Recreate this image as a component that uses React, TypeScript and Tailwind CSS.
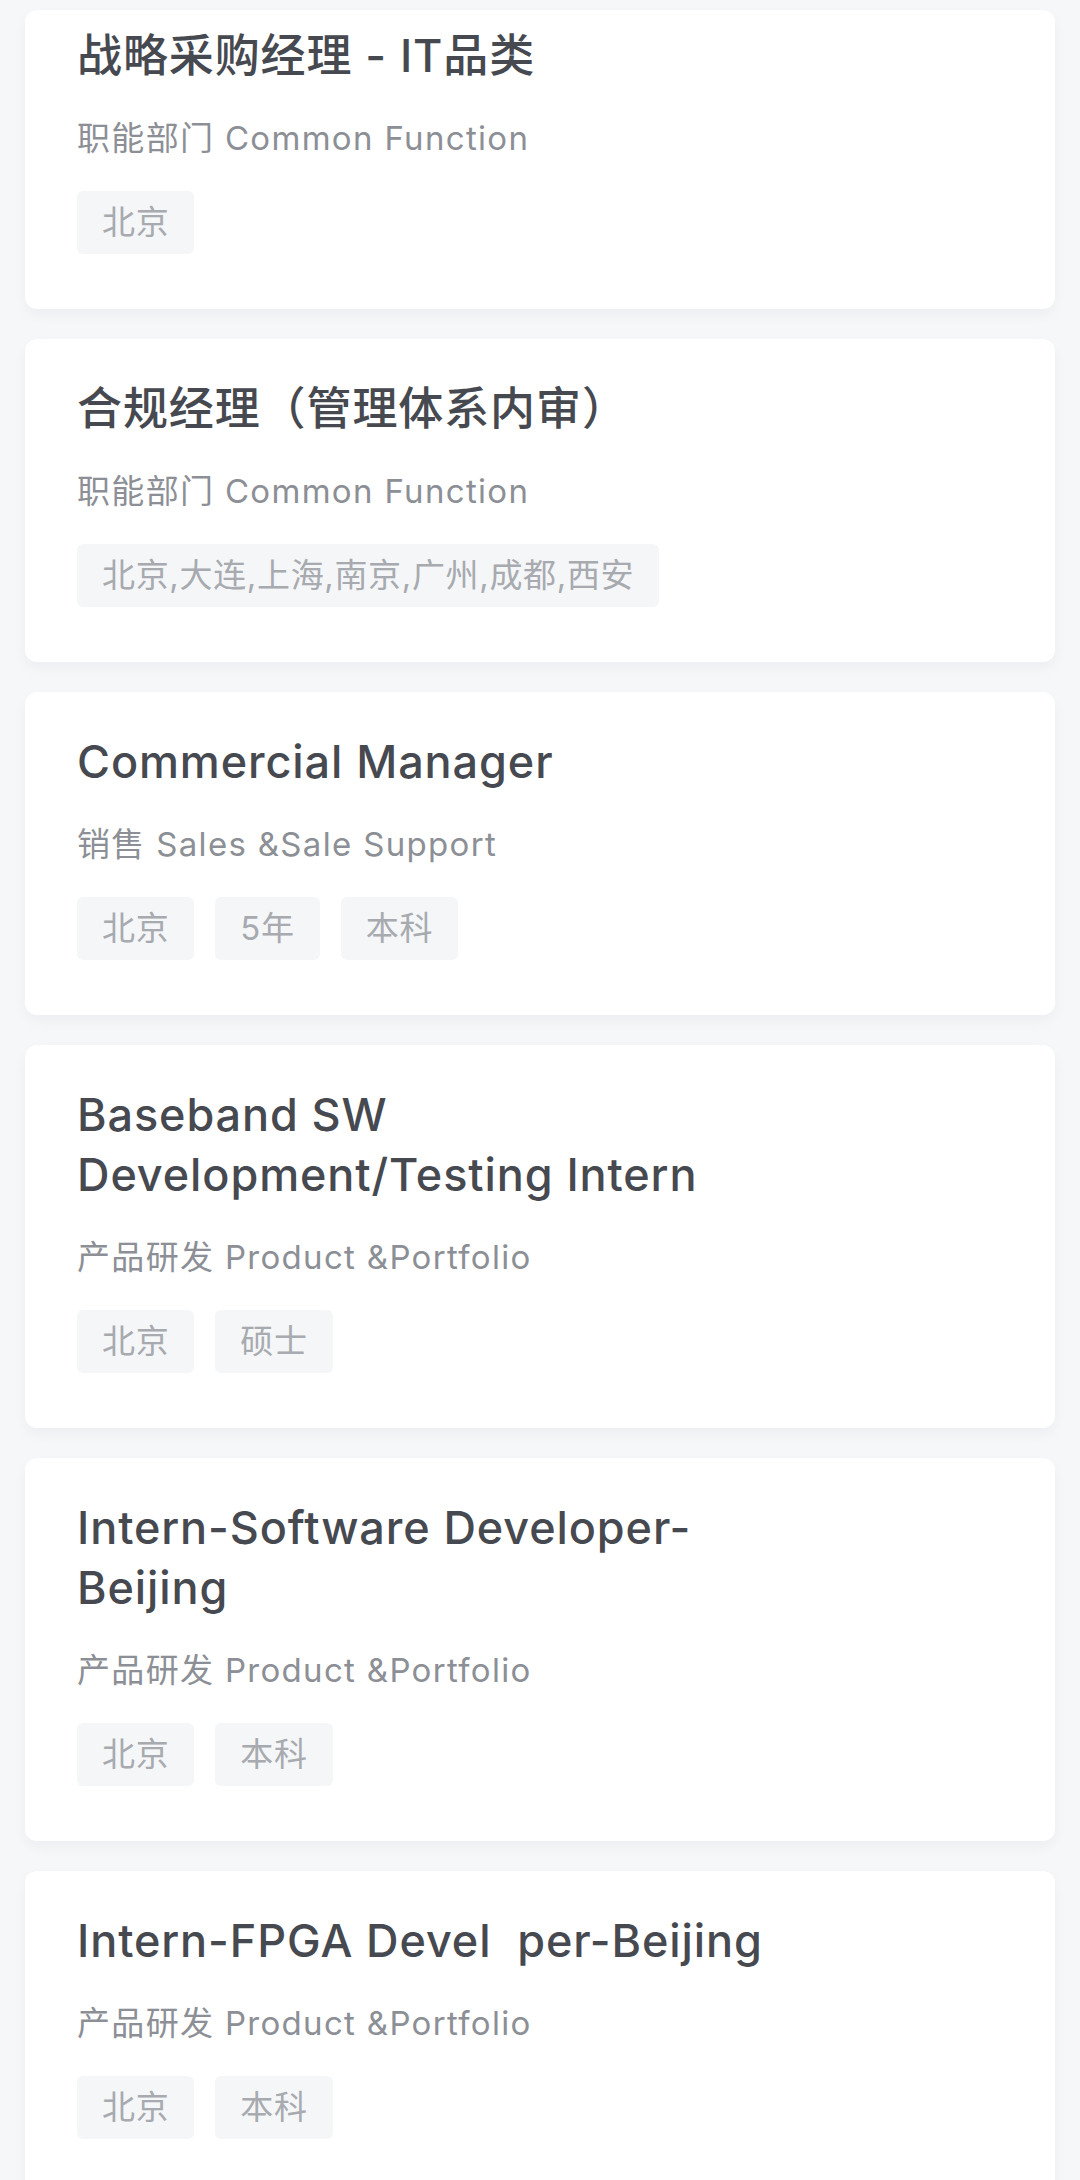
import React from "react";

type Job = {
  title: string[];
  dept: string;
  tags: string[];
  first?: boolean;
};

const jobs: Job[] = [
  { title: ["战略采购经理 - IT品类"], dept: "职能部门 Common Function", tags: ["北京"], first: true },
  { title: ["合规经理（管理体系内审）"], dept: "职能部门 Common Function", tags: ["北京,大连,上海,南京,广州,成都,西安"] },
  { title: ["Commercial Manager"], dept: "销售 Sales &Sale Support", tags: ["北京", "5年", "本科"] },
  { title: ["Baseband SW", "Development/Testing Intern"], dept: "产品研发 Product &Portfolio", tags: ["北京", "硕士"] },
  { title: ["Intern-Software Developer-", "Beijing"], dept: "产品研发 Product &Portfolio", tags: ["北京", "本科"] },
  { title: ["Intern-FPGA Devel  per-Beijing"], dept: "产品研发 Product &Portfolio", tags: ["北京", "本科"] },
];

function Card({ job }: { job: Job }) {
  return (
    <div
      className={
        "rounded-[12px] bg-white px-[52px] pb-[55px] shadow-[0_6px_14px_rgba(20,30,60,0.04)] " +
        (job.first ? "pt-[16px]" : "pt-[40px]")
      }
    >
      <h2 className="text-[45px] leading-[60px] font-medium tracking-[0.02em] text-[#46494f] whitespace-pre">
        {job.title.map((l, i) => (
          <div key={i}>{l}</div>
        ))}
      </h2>
      <p className="mt-[30px] text-[33px] leading-[44px] tracking-[0.04em] text-[#8c8f95]">{job.dept}</p>
      <div className="mt-[31px] flex gap-[21px]">
        {job.tags.map((t, i) => (
          <span
            key={i}
            className="flex h-[63px] items-center rounded-[6px] bg-[#f5f6f8] px-[25px] text-[33px] tracking-[0.02em] text-[#a7aaaf]"
          >
            {t}
          </span>
        ))}
      </div>
    </div>
  );
}

export default function App() {
  return (
    <div
      className="h-[2180px] w-[1080px] overflow-hidden bg-[#f6f7f9] px-[25px] pt-[10px]"
      style={{ fontFamily: 'Inter, "Noto Sans CJK SC", sans-serif' }}
    >
      <div className="flex flex-col gap-[30px]">
        {jobs.map((j, i) => (
          <Card key={i} job={j} />
        ))}
      </div>
    </div>
  );
}
